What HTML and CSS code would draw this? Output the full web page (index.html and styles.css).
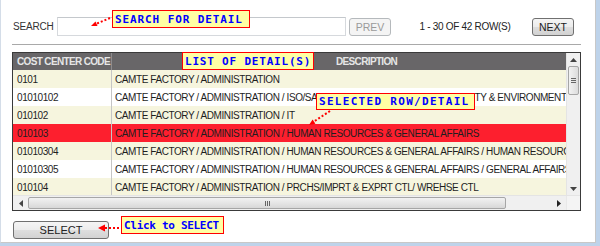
FILE: index.html
```html
<!DOCTYPE html>
<html lang="en">
<head>
  <meta charset="UTF-8" />
  <title>Cost Center Lookup</title>
  <link rel="stylesheet" href="styles.css">
</head>
<body>

  <div class="panel">
    <div class="toolbar">
      <label class="search-label" for="search">SEARCH</label>
      <input class="search-input" id="search" type="text">
      <button class="btn btn-small" disabled>PREV</button>
      <div class="page-info">1 - 30 OF 42 ROW(S)</div>
      <button class="btn btn-small">NEXT</button>
    </div>

    <hr class="divider">

    <div class="grid-view">
      <div class="grid-body">
        <div class="grid-rows">
          <div class="row head">
            <div class="cell code">COST CENTER CODE</div>
            <div class="cell desc">DESCRIPTION</div>
          </div>
          <div class="row alt">
            <div class="cell code">0101</div>
            <div class="cell desc">CAMTE FACTORY / ADMINISTRATION</div>
          </div>
          <div class="row">
            <div class="cell code">01010102</div>
            <div class="cell desc">CAMTE FACTORY / ADMINISTRATION / ISO/SAFETY / HEALTH, OCCUPATNL. SAFETY &amp; ENVIRONMENT</div>
          </div>
          <div class="row alt">
            <div class="cell code">010102</div>
            <div class="cell desc">CAMTE FACTORY / ADMINISTRATION / IT</div>
          </div>
          <div class="row selected">
            <div class="cell code">010103</div>
            <div class="cell desc">CAMTE FACTORY / ADMINISTRATION / HUMAN RESOURCES &amp; GENERAL AFFAIRS</div>
          </div>
          <div class="row alt">
            <div class="cell code">01010304</div>
            <div class="cell desc">CAMTE FACTORY / ADMINISTRATION / HUMAN RESOURCES &amp; GENERAL AFFAIRS / HUMAN RESOURCES</div>
          </div>
          <div class="row">
            <div class="cell code">01010305</div>
            <div class="cell desc">CAMTE FACTORY / ADMINISTRATION / HUMAN RESOURCES &amp; GENERAL AFFAIRS / GENERAL AFFAIRS</div>
          </div>
          <div class="row alt">
            <div class="cell code">010104</div>
            <div class="cell desc">CAMTE FACTORY / ADMINISTRATION / PRCHS/IMPRT &amp; EXPRT CTL/ WREHSE CTL</div>
          </div>
        </div>

        <div class="vscroll">
          <div class="sb-btn">
            <svg width="7" height="4" viewBox="0 0 7 4"><path d="M0 4 L3.5 0 L7 4 Z" fill="#444"/></svg>
          </div>
          <div class="vthumb"><span class="grip-h"></span></div>
          <div class="sb-track"></div>
          <div class="sb-btn">
            <svg width="7" height="4" viewBox="0 0 7 4"><path d="M0 0 L3.5 4 L7 0 Z" fill="#444"/></svg>
          </div>
        </div>
      </div>

      <div class="hscroll">
        <div class="sb-btn">
          <svg width="4" height="7" viewBox="0 0 4 7"><path d="M4 0 L0 3.5 L4 7 Z" fill="#444"/></svg>
        </div>
        <div class="hthumb"><span class="grip-v"></span></div>
        <div class="sb-track"></div>
        <div class="sb-btn">
          <svg width="4" height="7" viewBox="0 0 4 7"><path d="M0 0 L4 3.5 L0 7 Z" fill="#222"/></svg>
        </div>
        <div class="sb-corner"></div>
      </div>
    </div>

    <button class="btn btn-select">SELECT</button>

    <!-- help callouts -->
    <div class="note note-search">SEARCH FOR DETAIL</div>
    <div class="note note-list">LIST OF DETAIL(S)</div>
    <div class="note note-row">SELECTED ROW/DETAIL</div>
    <div class="note note-select">Click to SELECT</div>

    <svg class="arrows" width="596" height="243" viewBox="0 0 596 243">
      <g stroke="#ff0000" stroke-width="2" stroke-dasharray="2 2" fill="none">
        <line x1="110" y1="18" x2="97" y2="23.5"/>
        <line x1="330" y1="111" x2="314" y2="121.5"/>
        <line x1="119" y1="228" x2="105" y2="228"/>
      </g>
      <g fill="#ff0000">
        <polygon points="91,26 97.5,26 95.5,21.4"/>
        <polygon points="309,125 315.4,123.8 312.6,119.6"/>
        <polygon points="98,228 105,224.5 105,231.5"/>
      </g>
    </svg>
  </div>

</body>
</html>
```

FILE: styles.css
```css
body {
  margin: 0;
  background-color: #bed3ea;
  font-family: 'Liberation Sans', Arial, sans-serif;
  color: #222;
}

.panel {
  position: relative;
  box-sizing: border-box;
  width: 596px;
  height: 243px;
  padding: 17px 14px 0 11px;
  background-color: #fff;
  border-left: 1px solid #d4dde8;
  border-right: 1px solid #c8c8c8;
  border-bottom: 1px solid #c8c8c8;
}

/* toolbar */
.toolbar {
  display: flex;
  align-items: center;
  height: 19px;
}
.search-label {
  width: 44px;
  padding-left: 1px;
  font-size: 10px;
  letter-spacing: -0.2px;
  color: #333;
}
.search-input {
  box-sizing: border-box;
  width: 289px;
  height: 19px;
  margin: 0 3px 0 0;
  border: 1px solid #d6d9dd;
  border-top-color: #c4c8cc;
  padding: 0;
}
.page-info {
  flex: 1;
  text-align: center;
  font-size: 10px;
  letter-spacing: -0.3px;
  color: #222;
}

.btn {
  box-sizing: border-box;
  border: 1px solid #707070;
  border-radius: 3px;
  background: linear-gradient(#f5f5f5, #ececec 50%, #dedede 50%, #d2d2d2);
  font-family: 'Liberation Sans', Arial, sans-serif;
  font-size: 10.5px;
  color: #222;
  padding: 0;
}
.btn-small {
  width: 42px;
  height: 18px;
  margin-right: 7px;
}
.btn[disabled] {
  border-color: #b5b9bc;
  background: #f4f4f4;
  color: #9a9a9a;
}

.divider {
  margin: 8px 0 0;
  border: 0;
  border-top: 1px solid #a9a9a9;
  height: 0;
}

/* grid */
.grid-view {
  margin-top: 7px;
  border: 1px solid #3a3a3a;
  display: flex;
  flex-direction: column;
  height: 159px;
  box-sizing: border-box;
}
.grid-body {
  display: flex;
  flex: 1;
  min-height: 0;
}
.grid-rows {
  flex: 1;
  overflow: hidden;
}
.row {
  display: flex;
  height: 18px;
  width: 640px;
  background-color: #fff;
  font-size: 10px;
  letter-spacing: -0.42px;
  color: #1e1e1e;
}
.row.alt {
  background-color: #f6f5de;
}
.row.selected {
  background-color: #fd1f2e;
}
.row.head {
  height: 17px;
  background-color: #686668;
  color: #e6e6e6;
  font-weight: bold;
  letter-spacing: -0.65px;
}
.cell {
  display: flex;
  align-items: center;
  white-space: nowrap;
  overflow: hidden;
}
.cell.code {
  width: 94px;
  flex: none;
  padding-left: 4px;
  border-right: 1px solid #c6c6c6;
}
.row.head .cell.code {
  border-right-color: #8e8c8e;
}
.cell.desc {
  flex: 1;
  padding-left: 3px;
}
.row.head .cell.desc {
  padding-left: 224px;
}

/* scrollbars */
.vscroll {
  width: 13px;
  display: flex;
  flex-direction: column;
  background-color: #f0f0f0;
  border-left: 1px solid #e4e4e4;
}
.sb-btn {
  flex: none;
  width: 13px;
  height: 13px;
  display: flex;
  align-items: center;
  justify-content: center;
}
.sb-track {
  flex: 1;
}
.vthumb {
  height: 27px;
  margin: 0 1px;
  border: 1px solid #a6a6a6;
  border-radius: 2px;
  background: linear-gradient(to right, #f2f2f2, #dcdcdc);
  display: flex;
  align-items: center;
  justify-content: center;
}
.grip-h {
  width: 5px;
  height: 5px;
  background: repeating-linear-gradient(#666 0 1px, transparent 1px 2px);
}

.hscroll {
  display: flex;
  height: 14px;
  background-color: #f0f0f0;
  border-top: 1px solid #e4e4e4;
}
.hscroll .sb-btn {
  width: 15px;
  height: 14px;
}
.hthumb {
  width: 476px;
  margin: 1px 0;
  border: 1px solid #a6a6a6;
  border-radius: 2px;
  background: linear-gradient(#f2f2f2, #d8d8d8);
  display: flex;
  align-items: center;
  justify-content: center;
}
.grip-v {
  width: 5px;
  height: 5px;
  background: repeating-linear-gradient(to right, #666 0 1px, transparent 1px 2px);
}
.sb-corner {
  width: 13px;
  background-color: #f4f4f4;
  border-left: 1px solid #e8e8e8;
}

.btn-select {
  display: block;
  width: 96px;
  height: 18px;
  margin: 10px 0 0 1px;
  font-size: 11px;
}

/* callouts */
.note {
  position: absolute;
  box-sizing: border-box;
  display: flex;
  align-items: center;
  height: 18px;
  padding-left: 2px;
  background-color: #ffffa4;
  border: 1px solid #ff0000;
  color: #0000ff;
  font-family: 'DejaVu Sans Mono', monospace;
  font-weight: bold;
  font-size: 11px;
  white-space: nowrap;
}
.note-search {
  left: 111px;
  top: 10px;
  width: 138px;
  letter-spacing: 0.9px;
}
.note-list {
  left: 181px;
  top: 52px;
  width: 132px;
  letter-spacing: 0.8px;
}
.note-row {
  left: 315px;
  top: 93px;
  width: 159px;
  height: 17px;
  letter-spacing: 1.3px;
}
.note-select {
  left: 120px;
  top: 216px;
  width: 103px;
  letter-spacing: -0.3px;
}

.arrows {
  position: absolute;
  left: -1px;
  top: 0;
  pointer-events: none;
}
```
